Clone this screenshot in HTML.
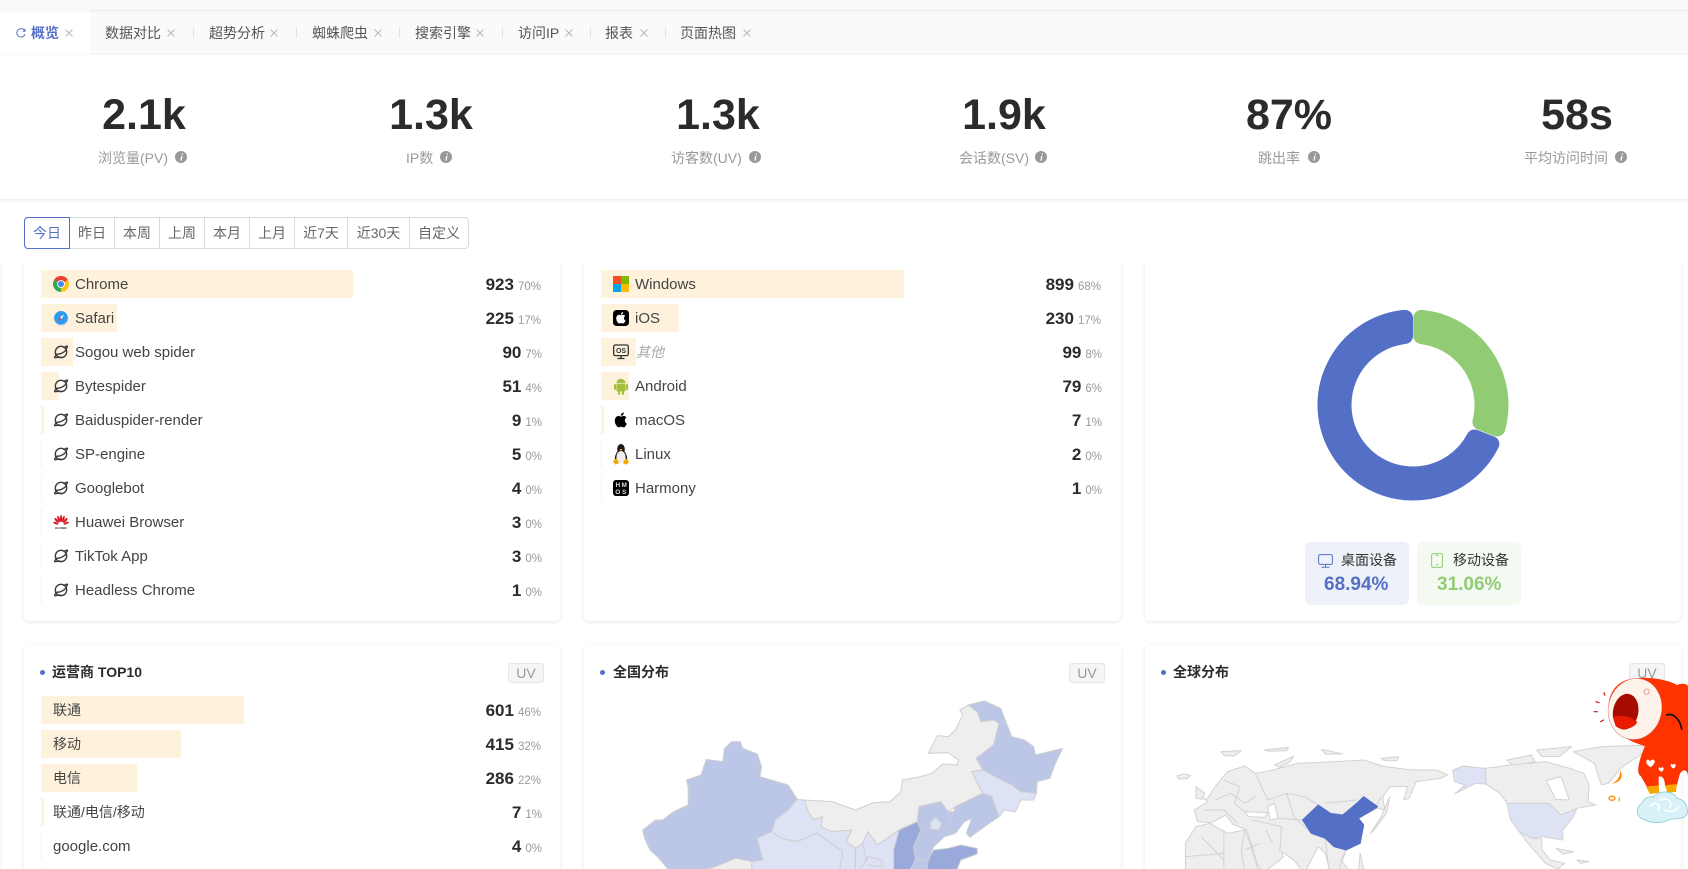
<!DOCTYPE html>
<html lang="zh">
<head>
<meta charset="utf-8">
<title>概览</title>
<style>
*{box-sizing:border-box;margin:0;padding:0}
html,body{width:1688px;height:869px;overflow:hidden;background:#fff}
body{position:relative;font-family:"Liberation Sans","Noto Sans CJK SC",sans-serif;color:#333;font-size:14px}
.a{position:absolute;white-space:nowrap}
#top{left:0;top:0;width:1688px;height:9px;background:#fafafa}
#tabs{left:0;top:9px;width:1688px;height:46px;background:#fafafa;box-shadow:inset 0 5px 5px -3px rgba(0,0,0,.06)}
#act{left:0;top:9px;width:91px;height:46px;background:#fff;box-shadow:inset 0 5px 5px -3px rgba(0,0,0,.05)}
.t{top:22px;line-height:22px;font-size:14px;color:#555}
.sp{top:27px;width:1px;height:11px;background:#e2e2e2}
.x{top:29px;width:8px;height:8px}
#stats{left:0;top:55px;width:1688px;height:144px;background:#fff;box-shadow:0 1px 4px rgba(0,0,0,.1)}
.n{top:86px;width:200px;text-align:center;font-size:43px;line-height:58px;font-weight:700;color:#2b2b2b}
.l{top:147px;line-height:22px;color:#999;font-size:14px}
.i{top:151px;width:12px;height:12px}
#btn{left:24px;top:217px;width:445px;height:32px;border:1px solid #d8dae2;border-radius:4px;background:#fff}
#btn span{position:absolute;top:0;height:30px;line-height:30px;text-align:center;color:#666;font-size:14px;border-right:1px solid #d8dae2}
#btn span.on{color:#5470c6;border:1px solid #5470c6;top:-1px;left:-1px;height:32px;border-radius:4px 0 0 4px}
#sc{left:0;top:263px;width:1688px;height:606px;overflow:hidden}
#in{position:absolute;left:0;top:-263px;width:1688px;height:869px;overflow:hidden}
.c{position:absolute;background:#fff;border-radius:6px;box-shadow:0 1px 5px rgba(0,0,0,.1)}
.bar{position:absolute;height:28px;background:#fef2dd}
.ic{position:absolute;width:16px;height:16px}
.lb{position:absolute;line-height:30px;height:28px;font-size:15px;color:#444;white-space:nowrap}
.lb.z{font-size:14px;line-height:28px}
.v{position:absolute;height:28px;line-height:30px;text-align:right;white-space:nowrap;font-size:17px;font-weight:700;color:#2b2b2b}
.v small{font-size:11.5px;font-weight:400;color:#999;margin-left:4px}
.tt{position:absolute;font-size:14px;font-weight:700;color:#2b2b2b;line-height:20px;white-space:nowrap}
.dot{position:absolute;width:5px;height:5px;border-radius:50%;background:#5470c6}
.uv{position:absolute;width:36px;height:20px;border:1px solid #e6e6e6;background:#f5f5f5;border-radius:3px;font-size:14px;color:#999;text-align:center;line-height:18px}
.lg{position:absolute;top:542px;width:104px;height:63px;border-radius:5px}
.lg b{position:absolute;font-size:19px;line-height:24px;top:31px;white-space:nowrap}
.lg span{position:absolute;font-size:14px;top:8px;line-height:20px;color:#333;white-space:nowrap}
svg{display:block}
</style>
</head>
<body>
<svg width="0" height="0" style="position:absolute">
<defs>
<symbol id="planet" viewBox="0 0 16 16"><g fill="none" stroke="#3a3a3a" stroke-width="1.35" stroke-linecap="round"><circle cx="8" cy="8" r="5.7"/><path d="M2.6 10.2C7 10.6 11 8.6 13.4 5.6"/><path d="M3.4 11C1 13 1 14 3 13.6 5 13.2 6.5 13 8.2 13.3"/><path d="M12.8 5C14.8 2.8 15 2 13.6 2.2 12.6 2.4 12 2.8 11 3.6"/></g></symbol>
<symbol id="apple" viewBox="2.2 1.6 11.6 13.2"><path d="M11.2 8.4c0-1.5 1.2-2.2 1.3-2.3-.7-1-1.8-1.2-2.2-1.2-.9-.1-1.8.5-2.3.5s-1.2-.5-2-.5C4.9 4.9 3.9 5.5 3.4 6.5c-1.1 1.9-.3 4.7.8 6.2.5.7 1.1 1.6 1.9 1.6s1-.5 2-.5 1.2.5 2 .5 1.4-.8 1.9-1.5c.6-.9.8-1.7.8-1.7s-1.6-.6-1.6-2.7zM9.7 3.9c.4-.5.7-1.2.6-1.9-.6 0-1.3.4-1.8.9-.4.4-.7 1.1-.6 1.8.7.1 1.4-.3 1.8-.8z"/></symbol>
<symbol id="info" viewBox="0 0 12 12"><circle cx="6" cy="6" r="6" fill="#999"/><path d="M6.8 2.6h1.3l-.3 1.3H6.5zM6.2 5h1.3L6.6 9.6H5.3z" fill="#fff"/></symbol>
<symbol id="cl" viewBox="0 0 8 8"><path d="M.5.5l7 7M7.5.5l-7 7" stroke="#b5b5b5" stroke-width=".9" fill="none"/></symbol>
</defs>
</svg>

<div class="a" id="top"></div>
<div class="a" id="tabs"></div>
<div class="a" id="act"></div>
<svg class="a" style="left:16px;top:28px" width="10" height="10" viewBox="0 0 10 10"><path d="M8.6 2.6A4.2 4.2 0 1 0 9 6.2" fill="none" stroke="#5470c6" stroke-width="1"/><path d="M9 .8v2.4H6.7" fill="none" stroke="#5470c6" stroke-width="1"/></svg>
<div class="a t" style="left:31px;color:#5470c6;font-weight:700">概览</div>
<svg class="a x" style="left:65px"><use href="#cl"/></svg>
<div class="a t" style="left:105px">数据对比</div><svg class="a x" style="left:167px"><use href="#cl"/></svg><div class="a sp" style="left:193px"></div>
<div class="a t" style="left:209px">超势分析</div><svg class="a x" style="left:270px"><use href="#cl"/></svg><div class="a sp" style="left:296px"></div>
<div class="a t" style="left:312px">蜘蛛爬虫</div><svg class="a x" style="left:374px"><use href="#cl"/></svg><div class="a sp" style="left:399px"></div>
<div class="a t" style="left:415px">搜索引擎</div><svg class="a x" style="left:476px"><use href="#cl"/></svg><div class="a sp" style="left:502px"></div>
<div class="a t" style="left:518px">访问IP</div><svg class="a x" style="left:565px"><use href="#cl"/></svg><div class="a sp" style="left:590px"></div>
<div class="a t" style="left:605px">报表</div><svg class="a x" style="left:640px"><use href="#cl"/></svg><div class="a sp" style="left:665px"></div>
<div class="a t" style="left:680px">页面热图</div><svg class="a x" style="left:743px"><use href="#cl"/></svg>

<div class="a" id="stats"></div>
<div class="a n" style="left:44px">2.1k</div>
<div class="a n" style="left:331px">1.3k</div>
<div class="a n" style="left:618px">1.3k</div>
<div class="a n" style="left:904px">1.9k</div>
<div class="a n" style="left:1189px">87%</div>
<div class="a n" style="left:1477px">58s</div>
<div class="a l" style="left:98px">浏览量(PV)</div><svg class="a i" style="left:175px"><use href="#info"/></svg>
<div class="a l" style="left:406px">IP数</div><svg class="a i" style="left:440px"><use href="#info"/></svg>
<div class="a l" style="left:671px">访客数(UV)</div><svg class="a i" style="left:749px"><use href="#info"/></svg>
<div class="a l" style="left:959px">会话数(SV)</div><svg class="a i" style="left:1035px"><use href="#info"/></svg>
<div class="a l" style="left:1258px">跳出率</div><svg class="a i" style="left:1308px"><use href="#info"/></svg>
<div class="a l" style="left:1524px">平均访问时间</div><svg class="a i" style="left:1615px"><use href="#info"/></svg>

<div class="a" id="btn">
<span class="on" style="width:46px">今日</span>
<span style="left:45px;width:45px">昨日</span>
<span style="left:90px;width:45px">本周</span>
<span style="left:135px;width:45px">上周</span>
<span style="left:180px;width:45px">本月</span>
<span style="left:225px;width:45px">上月</span>
<span style="left:270px;width:53px">近7天</span>
<span style="left:323px;width:62px">近30天</span>
<span style="left:385px;width:58px;border:0">自定义</span>
</div>

<div class="a" id="sc">
<div id="in">
<!-- cards row 1 -->
<div class="c" style="left:24px;top:200px;width:536px;height:421px"></div>
<div class="c" style="left:584px;top:200px;width:537px;height:421px"></div>
<div class="c" style="left:1145px;top:200px;width:536px;height:421px"></div>
<!-- cards row 2 -->
<div class="c" style="left:24px;top:645px;width:536px;height:224px;border-radius:6px 6px 0 0"></div>
<div class="c" style="left:584px;top:645px;width:537px;height:224px;border-radius:6px 6px 0 0"></div>
<div class="c" style="left:1145px;top:645px;width:536px;height:224px;border-radius:6px 6px 0 0"></div>

<!-- card 1 rows -->
<div class="bar" style="left:41px;top:270px;width:312px"></div>
<svg class="ic" style="left:53px;top:276px" viewBox="0 0 16 16"><path d="M8 8L1.07 4A8 8 0 0 1 14.93 4Z" fill="#e8412f"/><path d="M8 8L1.07 4A8 8 0 0 0 8 16Z" fill="#36a852"/><path d="M8 8L14.93 4A8 8 0 0 1 8 16Z" fill="#fbc116"/><circle cx="8" cy="8" r="3.9" fill="#fff"/><circle cx="8" cy="8" r="3" fill="#4485f1"/></svg>
<div class="lb" style="left:75px;top:270px">Chrome</div>
<div class="v" style="right:1147px;top:270px">923<small>70%</small></div>

<div class="bar" style="left:41px;top:304px;width:76px"></div>
<svg class="ic" style="left:53px;top:310px" viewBox="0 0 16 16"><ellipse cx="8" cy="9" rx="7.5" ry="7" fill="#d9dde2"/><circle cx="8" cy="7.8" r="6.8" fill="#2f9bf0"/><path d="M11 4.5L7 7.2 8.8 9z" fill="#fff"/><path d="M4.7 11.2L7 7.2 8.8 9z" fill="#e5413a"/></svg>
<div class="lb" style="left:75px;top:304px">Safari</div>
<div class="v" style="right:1147px;top:304px">225<small>17%</small></div>

<div class="bar" style="left:41px;top:338px;width:32px"></div>
<svg class="ic" style="left:53px;top:344px"><use href="#planet"/></svg>
<div class="lb" style="left:75px;top:338px">Sogou web spider</div>
<div class="v" style="right:1146px;top:338px">90<small>7%</small></div>

<div class="bar" style="left:41px;top:372px;width:18px"></div>
<svg class="ic" style="left:53px;top:378px"><use href="#planet"/></svg>
<div class="lb" style="left:75px;top:372px">Bytespider</div>
<div class="v" style="right:1146px;top:372px">51<small>4%</small></div>

<div class="bar" style="left:41px;top:406px;width:3px"></div>
<svg class="ic" style="left:53px;top:412px"><use href="#planet"/></svg>
<div class="lb" style="left:75px;top:406px">Baiduspider-render</div>
<div class="v" style="right:1146px;top:406px">9<small>1%</small></div>

<div class="bar" style="left:41px;top:440px;width:1px"></div>
<svg class="ic" style="left:53px;top:446px"><use href="#planet"/></svg>
<div class="lb" style="left:75px;top:440px">SP-engine</div>
<div class="v" style="right:1146px;top:440px">5<small>0%</small></div>

<div class="bar" style="left:41px;top:474px;width:1px"></div>
<svg class="ic" style="left:53px;top:480px"><use href="#planet"/></svg>
<div class="lb" style="left:75px;top:474px">Googlebot</div>
<div class="v" style="right:1146px;top:474px">4<small>0%</small></div>

<div class="bar" style="left:41px;top:508px;width:1px"></div>
<svg class="ic" style="left:53px;top:514px" viewBox="0 0 16 16"><g fill="#d9151f"><ellipse cx="8" cy="4.5" rx="1.1" ry="3.6"/><ellipse cx="5.7" cy="5" rx="1.1" ry="3.4" transform="rotate(-18 5.7 5)"/><ellipse cx="10.3" cy="5" rx="1.1" ry="3.4" transform="rotate(18 10.3 5)"/><ellipse cx="3.6" cy="6.4" rx="1.1" ry="3.2" transform="rotate(-40 3.6 6.4)"/><ellipse cx="12.4" cy="6.4" rx="1.1" ry="3.2" transform="rotate(40 12.4 6.4)"/><ellipse cx="2.8" cy="9.2" rx="1" ry="2.8" transform="rotate(-68 2.8 9.2)"/><ellipse cx="13.2" cy="9.2" rx="1" ry="2.8" transform="rotate(68 13.2 9.2)"/></g><text x="8" y="15.2" font-size="3" font-weight="700" text-anchor="middle" fill="#333" font-family="Liberation Sans">HUAWEI</text></svg>
<div class="lb" style="left:75px;top:508px">Huawei Browser</div>
<div class="v" style="right:1146px;top:508px">3<small>0%</small></div>

<div class="bar" style="left:41px;top:542px;width:1px"></div>
<svg class="ic" style="left:53px;top:548px"><use href="#planet"/></svg>
<div class="lb" style="left:75px;top:542px">TikTok App</div>
<div class="v" style="right:1146px;top:542px">3<small>0%</small></div>

<div class="bar" style="left:41px;top:576px;width:1px"></div>
<svg class="ic" style="left:53px;top:582px"><use href="#planet"/></svg>
<div class="lb" style="left:75px;top:576px">Headless Chrome</div>
<div class="v" style="right:1146px;top:576px">1<small>0%</small></div>

<!-- card 2 rows -->
<div class="bar" style="left:601px;top:270px;width:303px"></div>
<svg class="ic" style="left:613px;top:276px" viewBox="0 0 16 16"><rect width="8" height="8" fill="#f25022"/><rect x="8" width="8" height="8" fill="#7fba00"/><rect y="8" width="8" height="8" fill="#00a4ef"/><rect x="8" y="8" width="8" height="8" fill="#ffb900"/></svg>
<div class="lb" style="left:635px;top:270px">Windows</div>
<div class="v" style="right:587px;top:270px">899<small>68%</small></div>

<div class="bar" style="left:601px;top:304px;width:78px"></div>
<svg class="ic" style="left:613px;top:310px" viewBox="0 0 16 16"><rect width="16" height="16" rx="3.5" fill="#000"/><use href="#apple" x="2.6" y="1.6" width="10.8" height="12.4" fill="#fff"/></svg>
<div class="lb" style="left:635px;top:304px">iOS</div>
<div class="v" style="right:587px;top:304px">230<small>17%</small></div>

<div class="bar" style="left:601px;top:338px;width:35px"></div>
<svg class="ic" style="left:613px;top:344px" viewBox="0 0 16 16"><rect x=".7" y="1" width="14.6" height="10.6" rx="1.6" fill="none" stroke="#333" stroke-width="1.3"/><path d="M8 11.6v2.6M4.5 14.5h7" stroke="#333" stroke-width="1.3"/><text x="8" y="9" font-size="7" font-weight="700" text-anchor="middle" fill="#333" font-family="Liberation Sans">OS</text></svg>
<div class="lb z" style="left:636px;top:338px;color:#aaa;font-style:italic">其他</div>
<div class="v" style="right:586px;top:338px">99<small>8%</small></div>

<div class="bar" style="left:601px;top:372px;width:28px"></div>
<svg class="ic" style="left:613px;top:377px;height:18px" viewBox="0 0 16 18"><g fill="#a4c03f"><path d="M3.4 6.4a4.6 4.6 0 0 1 9.2 0z"/><rect x="3.4" y="7" width="9.2" height="7.4" rx="1"/><rect x="1" y="7" width="2" height="6" rx="1"/><rect x="13" y="7" width="2" height="6" rx="1"/><rect x="5" y="13" width="2.1" height="5" rx="1"/><rect x="8.9" y="13" width="2.1" height="5" rx="1"/></g></svg>
<div class="lb" style="left:635px;top:372px">Android</div>
<div class="v" style="right:586px;top:372px">79<small>6%</small></div>

<div class="bar" style="left:601px;top:406px;width:3px"></div>
<svg class="ic" style="left:613px;top:412px"><use href="#apple" fill="#000"/></svg>
<div class="lb" style="left:635px;top:406px">macOS</div>
<div class="v" style="right:586px;top:406px">7<small>1%</small></div>

<div class="bar" style="left:601px;top:440px;width:1px"></div>
<svg class="ic" style="left:613px;top:444px;height:21px" viewBox="0 0 16 21"><ellipse cx="8" cy="5" rx="3.8" ry="5" fill="#1a1a1a"/><path d="M8 4C3 7.5 .8 13 2.2 18h11.6C15.2 13 13 7.5 8 4z" fill="#1a1a1a"/><ellipse cx="8" cy="13" rx="4.6" ry="6" fill="#efefef"/><path d="M6.4 5h3.2L8 7z" fill="#f5a800"/><path d="M0 17.4l3.4-3.4 2.6 5.2-3.4 1.6zM16 17.4L12.6 14 10 19.2l3.4 1.6z" fill="#f5a800"/></svg>
<div class="lb" style="left:635px;top:440px">Linux</div>
<div class="v" style="right:586px;top:440px">2<small>0%</small></div>

<div class="bar" style="left:601px;top:474px;width:1px"></div>
<svg class="ic" style="left:613px;top:480px" viewBox="0 0 16 16"><rect width="16" height="16" rx="3" fill="#000"/><g font-size="6.5" font-weight="700" fill="#ddd" text-anchor="middle" font-family="Liberation Sans"><text x="4.8" y="7.2">H</text><text x="11.2" y="7.2">M</text><text x="4.8" y="14">O</text><text x="11.2" y="14">S</text></g></svg>
<div class="lb" style="left:635px;top:474px">Harmony</div>
<div class="v" style="right:586px;top:474px">1<small>0%</small></div>

<!-- donut -->
<svg class="a" style="left:1413px;top:405.3px;overflow:visible" width="1" height="1">
<path d="M8.3 -87.1A87.5 87.5 0 0 1 84.29 23.47L67.39 16.98A69.5 69.5 0 0 0 8.3 -69Z" fill="#91cc75" stroke="#91cc75" stroke-width="16" stroke-linejoin="round"/>
<path d="M78.35 38.96A87.5 87.5 0 1 1 -8 -87.13L-8 -69.04A69.5 69.5 0 1 0 61.45 32.48Z" fill="#5470c6" stroke="#5470c6" stroke-width="16" stroke-linejoin="round"/>
</svg>
<div class="lg" style="left:1305px;background:#eef1f9">
<svg class="a" style="left:13px;top:12px" width="15" height="14" viewBox="0 0 15 14"><rect x=".6" y=".6" width="13.8" height="9.8" rx="1.6" fill="none" stroke="#5470c6"/><path d="M7.5 10.5v2.6M3.5 13.3h8" stroke="#5470c6" fill="none"/></svg>
<span style="left:36px">桌面设备</span><b style="left:19px;color:#5470c6">68.94%</b>
</div>
<div class="lg" style="left:1417px;background:#f4f9f1">
<svg class="a" style="left:14px;top:11px" width="12" height="15" viewBox="0 0 12 15"><rect x=".6" y=".6" width="10.8" height="13.8" rx="1.6" fill="none" stroke="#91cc75"/><path d="M4.5 2.4h3" stroke="#91cc75"/><circle cx="6" cy="11.6" r=".9" fill="#91cc75"/></svg>
<span style="left:36px">移动设备</span><b style="left:20px;color:#91cc75">31.06%</b>
</div>

<!-- row 2 headers -->
<div class="dot" style="left:40px;top:670px"></div><div class="tt" style="left:52px;top:662px">运营商 TOP10</div><div class="uv" style="left:508px;top:663px">UV</div>
<div class="dot" style="left:600px;top:670px"></div><div class="tt" style="left:613px;top:662px">全国分布</div><div class="uv" style="left:1069px;top:663px">UV</div>
<div class="dot" style="left:1161px;top:670px"></div><div class="tt" style="left:1173px;top:662px">全球分布</div><div class="uv" style="left:1629px;top:663px">UV</div>

<!-- carrier rows -->
<div class="bar" style="left:41px;top:696px;width:203px"></div><div class="lb z" style="left:53px;top:696px">联通</div><div class="v" style="right:1147px;top:696px">601<small>46%</small></div>
<div class="bar" style="left:41px;top:730px;width:140px"></div><div class="lb z" style="left:53px;top:730px">移动</div><div class="v" style="right:1147px;top:730px">415<small>32%</small></div>
<div class="bar" style="left:41px;top:764px;width:96px"></div><div class="lb z" style="left:53px;top:764px">电信</div><div class="v" style="right:1147px;top:764px">286<small>22%</small></div>
<div class="bar" style="left:41px;top:798px;width:3px"></div><div class="lb z" style="left:53px;top:798px">联通/电信/移动</div><div class="v" style="right:1146px;top:798px">7<small>1%</small></div>
<div class="bar" style="left:41px;top:832px;width:1px"></div><div class="lb" style="left:53px;top:832px">google.com</div><div class="v" style="right:1146px;top:832px">4<small>0%</small></div>
<div class="bar" style="left:41px;top:866px;width:1px;height:3px"></div>

<!-- maps -->
<svg class="a" style="left:0;top:0;overflow:hidden" width="1688" height="869">
<g transform="translate(570 630) scale(.3636 .3333)" stroke="#cfcfcf" stroke-linejoin="round">
<path vector-effect="non-scaling-stroke" fill="#eee" d="M1095 225L1072 240 1080 255 1060 300 1040 320 1010 317 995 350 985 370 1040 368 1068 390 1065 405 1025 402 995 430 965 440 915 450 910 485 880 515 835 518 785 540 720 515 645 510 655 545 670 570 695 560 690 590 720 605 775 600 760 635 785 655 805 640 820 605 845 645 905 600 955 575 960 530 1020 515 1040 545 1060 530 1135 490 1105 425 1135 420 1117 385 1165 345 1180 280 1165 270 1130 275 1120 245Z"/>
<path vector-effect="non-scaling-stroke" fill="#bcc6e6" d="M1095 225L1140 213 1185 235 1195 265 1215 320 1250 330 1275 350 1280 375 1355 355 1335 400 1320 445 1285 455 1283 490 1240 485 1215 465 1170 440 1135 420 1130 405 1117 385 1165 345 1180 280 1165 270 1130 275 1120 245Z"/>
<path vector-effect="non-scaling-stroke" fill="#dde2f4" d="M1105 425L1135 420 1170 440 1215 465 1240 485 1283 490 1275 510 1240 510 1225 545 1195 540 1180 560 1160 500 1135 490Z"/>
<path vector-effect="non-scaling-stroke" fill="#bcc6e6" d="M1135 490L1160 500 1180 560 1140 590 1100 622 1090 610 1105 565 1085 575 1060 610 1040 590 1055 545 1060 530Z"/>
<path vector-effect="non-scaling-stroke" fill="#bcc6e6" d="M960 530L1020 515 1040 545 1055 545 1040 590 1060 610 1030 620 1000 650 985 690 950 690 945 650 965 600 955 575Z"/>
<path vector-effect="non-scaling-stroke" fill="#dde2f4" d="M990 578L1005 562 1022 580 1015 600 993 598Z"/>
<path vector-effect="non-scaling-stroke" fill="#99a9dc" d="M905 600L955 575 965 600 945 650 950 690 930 730 890 730 890 660Z"/>
<path vector-effect="non-scaling-stroke" fill="#99a9dc" d="M985 690L1000 660 1040 655 1075 645 1120 655 1120 672 1075 690 1060 730 980 730Z"/>
<path vector-effect="non-scaling-stroke" fill="#bcc6e6" d="M950 690L985 690 980 730 930 730Z"/>
<path vector-effect="non-scaling-stroke" fill="#bcc6e6" d="M445 335L468 335 475 355 515 372 527 410 522 440 600 465 625 508 600 540 565 570 555 605 515 625 530 690 500 695 455 685 400 710 330 730 280 730 240 680 220 660 205 625 200 600 235 570 255 570 285 545 325 525 325 470 320 450 360 435 375 388 420 395 425 355Z"/>
<path vector-effect="non-scaling-stroke" fill="#dde2f4" d="M625 508L645 510 655 545 670 570 695 560 690 590 720 605 775 600 760 635 785 655 805 640 820 605 845 645 905 600 890 660 890 730 740 730 750 665 680 610 625 635 580 625 555 605 565 570 600 540Z"/>
<path vector-effect="non-scaling-stroke" fill="#dde2f4" d="M515 625L555 605 580 625 625 635 680 610 750 665 740 730 500 730 500 695 530 690Z"/>
<path vector-effect="non-scaling-stroke" fill="#eee" d="M355 730L400 710 455 685 500 695 500 730Z"/>
<path vector-effect="non-scaling-stroke" fill="#dde2f4" d="M785 655L805 640 815 690 795 720 800 730 785 730Z"/>
<path vector-effect="non-scaling-stroke" fill="none" d="M820 680L858 690 858 730M815 690L820 680M820 705L855 710"/>
</g>

<g transform="translate(1140 630) scale(.3495 .3333)" stroke="#d2d2d2" fill="#eee" stroke-linejoin="round">
<path vector-effect="non-scaling-stroke" d="M105 438L125 432 145 436 135 446 112 447Z"/>
<path vector-effect="non-scaling-stroke" d="M232 365L290 362 270 378 240 376ZM355 360L425 352 420 362 370 364ZM520 358L580 372 530 372ZM385 405L440 378 430 395 400 412ZM690 385L740 380 735 392 700 392Z"/>
<path vector-effect="non-scaling-stroke" d="M215 470L250 425 300 408 330 430 380 420 450 400 560 395 640 390 700 410 780 420 850 420 880 435 860 445 790 455 770 505 755 510 765 470 715 470 695 500 700 540 680 535 650 550 625 565 640 585 630 640 590 660 575 690 605 730 545 730 530 670 510 650 470 730 440 690 405 665 410 680 395 695 350 730 335 700 318 640 305 600 265 582 245 555 205 578 165 575 155 540 195 515 165 490 190 510Z"/>
<path vector-effect="non-scaling-stroke" d="M130 640L160 590 200 580 250 610 300 600 315 640 335 710 345 730 130 730Z"/>
<path vector-effect="non-scaling-stroke" d="M160 470L185 490 178 508 160 505ZM715 500L705 550 670 600 660 610 690 560Z"/>
<path vector-effect="non-scaling-stroke" fill="#fff" d="M300 545L365 548 358 562 310 560ZM365 530L385 520 395 565 372 570Z"/>
<path vector-effect="non-scaling-stroke" fill="none" d="M215 510L260 490 300 520 330 500M240 450L285 470 270 520 300 545M330 430L365 510 420 490 470 500 510 525M395 565L465 570M300 600L290 660 300 730M175 620L240 690 240 730M345 640L300 660M420 490L440 560 490 610M180 540L240 540 280 580M530 625L540 717M590 660L570 717M530 520L620 510M690 500L670 540M320 570L405 590 400 665M130 680L240 670M240 600L240 730M360 600L380 640"/>
<path vector-effect="non-scaling-stroke" fill="#5470c6" stroke="#5470c6" d="M465 570L510 525 545 550 580 555 620 520 640 500 680 530 650 550 625 565 640 585 630 640 590 660 555 650 530 625 490 610Z"/>
<path vector-effect="non-scaling-stroke" d="M630 670L640 717 625 720ZM1050 390L1120 375 1130 395 1070 410ZM1135 360L1235 350 1200 380 1150 380Z"/>
<path vector-effect="non-scaling-stroke" fill="#dde2f4" d="M895 420L925 408 988 415 990 462 960 460 900 492 930 465 900 455Z"/>
<path vector-effect="non-scaling-stroke" d="M988 415L1060 405 1160 395 1230 415 1270 430 1285 465 1282 515 1305 525 1250 535 1205 555 1170 520 1050 520 1030 490 990 462Z"/>
<path vector-effect="non-scaling-stroke" fill="#fff" d="M1162 452L1205 440 1228 510 1190 508Z"/>
<path vector-effect="non-scaling-stroke" fill="#dde2f4" d="M1050 520L1170 520 1205 555 1250 535 1240 560 1210 600 1210 630 1150 620 1120 625 1085 605 1060 570Z"/>
<path vector-effect="non-scaling-stroke" d="M1085 605L1120 625 1150 625 1150 660 1175 690 1215 700 1195 717 1160 700 1110 640Z"/>
<path vector-effect="non-scaling-stroke" d="M1240 365L1320 350 1460 345 1440 370 1380 410 1340 460 1320 465 1300 400Z"/>
<path vector-effect="non-scaling-stroke" d="M1190 655L1240 665 1210 672ZM1250 690L1285 695 1260 700ZM1195 717L1285 730 1195 730Z"/>
</g>
</svg>

<!-- left page edge -->
<div class="a" style="left:0;top:55px;width:2px;height:814px;background:#f8f8f8"></div>

<!-- mascot -->
<svg class="a" style="left:1570px;top:660px;overflow:hidden" width="118" height="170" viewBox="0 0 354 510">
<path d="M225 258C205 305 198 340 212 348L232 382H266V350C278 345 285 360 285 378H320L330 340C345 322 354 335 354 350V290Z" fill="#ff3300"/>
<path d="M228 380L266 376 268 398 240 402ZM285 376L320 372 318 396 292 398Z" fill="#f7a800"/>
<path d="M115 145C115 90 150 55 200 55 240 50 290 58 322 75 335 68 354 72 354 80V302C320 292 290 278 260 268 200 252 115 230 115 145Z" fill="#ff3300"/>
<ellipse cx="195" cy="147" rx="80" ry="92" transform="rotate(12 195 147)" fill="#fdf3ea" stroke="#d9766a" stroke-width="1.5"/>
<ellipse cx="167" cy="155" rx="38" ry="54" transform="rotate(10 167 155)" fill="#a50b00"/>
<path d="M130 172C150 160 185 170 202 186 192 208 150 215 136 196Z" fill="#e81a00"/>
<circle cx="230" cy="95" r="8" fill="none" stroke="#e88a8a" stroke-width="2.5"/>
<path d="M290 165C310 158 330 178 335 207" fill="none" stroke="#111" stroke-width="5" stroke-linecap="round"/>
<path d="M275 185l8 4M275 195l7 2" stroke="#c92100" stroke-width="2"/>
<path d="M102 98l3 8M78 125l9 3M72 155l10 0M92 185l9-5" stroke="#c4141a" stroke-width="3.5" stroke-linecap="round"/>
<path d="M240 304C234 294 228 300 229 307 230 314 236 317 242 322 248 316 254 312 254 305 254 298 246 296 240 304Z" fill="#fff"/>
<path d="M273 325C269 319 265 322 266 327 267 331 270 333 274 336 278 333 281 330 281 326 281 321 276 320 273 325Z" fill="#fff"/>
<path d="M309 315C305 309 301 312 302 317 303 321 306 323 310 326 314 323 317 320 317 316 317 311 312 310 309 315Z" fill="#fff"/>
<path d="M150 332C160 345 156 368 125 371 145 362 150 350 150 332Z" fill="#ff8c00"/>
<ellipse cx="126" cy="415" rx="9" ry="6" fill="none" stroke="#ff8c00" stroke-width="4"/>
<path d="M148 412l-1 13" stroke="#ff8c00" stroke-width="3"/>
<path d="M222 478C200 474 194 445 215 430 222 412 240 408 250 412 262 390 310 390 322 415 345 420 354 438 352 460 345 478 320 475 300 478 280 490 245 492 222 478Z" fill="#d9f1f8" stroke="#8ecbd6" stroke-width="2.5"/>
<path d="M240 440c15-20 35-5 25 8M270 420c20-10 40 5 30 22M285 450c15 8 35 0 40-8" fill="none" stroke="#fff" stroke-width="5" stroke-linecap="round"/>
</svg>
</div>
</div>
</body>
</html>
